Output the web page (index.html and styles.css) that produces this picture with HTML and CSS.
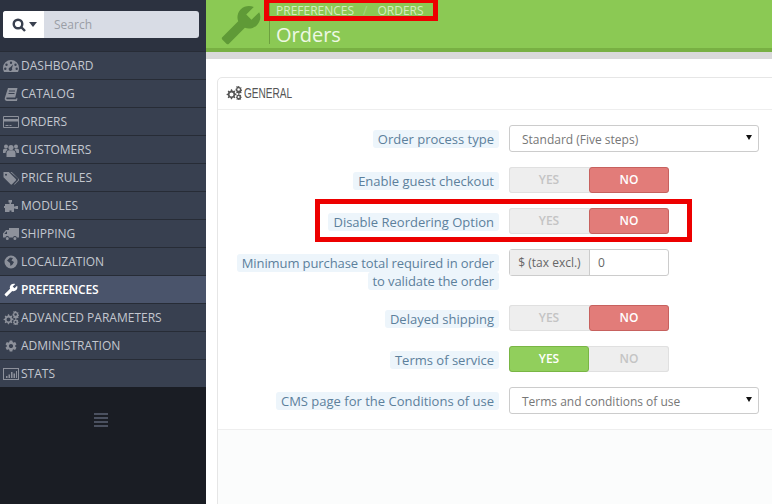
FILE: index.html
```html
<!DOCTYPE html>
<html lang="en">
<head>
    <meta charset="UTF-8">
    <title>Orders</title>
    <link rel="stylesheet" href="styles.css">
</head>
<body>
<svg class="sprite" xmlns="http://www.w3.org/2000/svg">
    <symbol id="i-wrench" viewBox="0 0 24 24"><path transform="translate(24 0) scale(-1 1)" d="M22.7 19l-9.1-9.1c.9-2.3.4-5-1.5-6.9-2-2-5-2.4-7.4-1.3L9 6 6 9 1.6 4.7C.4 7.1.9 10.1 2.9 12.1c1.9 1.9 4.6 2.4 6.9 1.5l9.1 9.1c.4.4 1 .4 1.4 0l2.3-2.3c.5-.4.5-1.1.1-1.4z"/></symbol>
    <symbol id="i-gear" viewBox="0 0 24 24"><path d="M19.14 12.94c.04-.3.06-.61.06-.94 0-.32-.02-.64-.07-.94l2.03-1.58c.18-.14.23-.41.12-.61l-1.92-3.32c-.12-.22-.37-.29-.59-.22l-2.39.96c-.5-.38-1.03-.7-1.62-.94l-.36-2.54c-.04-.24-.24-.41-.48-.41h-3.84c-.24 0-.43.17-.47.41l-.36 2.54c-.59.24-1.13.57-1.62.94l-2.39-.96c-.22-.08-.47 0-.59.22L2.74 8.87c-.12.21-.08.47.12.61l2.03 1.58c-.05.3-.09.63-.09.94s.02.64.07.94l-2.03 1.58c-.18.14-.23.41-.12.61l1.92 3.32c.12.22.37.29.59.22l2.39-.96c.5.38 1.03.7 1.62.94l.36 2.54c.05.24.24.41.48.41h3.84c.24 0 .44-.17.47-.41l.36-2.54c.59-.24 1.13-.56 1.62-.94l2.39.96c.22.08.47 0 .59-.22l1.92-3.32c.12-.22.07-.47-.12-.61l-2.01-1.58zM12 15.6c-1.98 0-3.6-1.62-3.6-3.6s1.62-3.6 3.6-3.6 3.6 1.62 3.6 3.6-1.62 3.6-3.6 3.6z"/></symbol>
    <symbol id="i-gears" viewBox="0 0 16 14"><g fill-rule="evenodd"><path d="M5 3.2l1 .1.4 1.3.9.4 1.2-.6.8.8-.6 1.2.4.9 1.3.4v1.2l-1.3.4-.4.9.6 1.2-.8.8-1.2-.6-.9.4-.4 1.3H5l-.4-1.3-.9-.4-1.2.6-.8-.8.6-1.2-.4-.9L.6 9.1V7.900l1.300-.4.4-.9-.6-1.200.8-.8 1.200.6.9-.4zM5.500 6.500a2 2 0 1 0 0 4 2 2 0 0 0 0-4z"/><path d="M12.500 0l.8.2.2.9.7.4.9-.3.5.6-.5.8.2.8.8.4v.8l-.8.4-.2.8.5.8-.5.6-.9-.3-.7.4-.2.9h-.8l-.3-.9-.7-.3-.9.3-.5-.6.5-.8-.2-.8-.8-.4V2.800l.8-.4.2-.8-.5-.8.5-.6.9.3.7-.3zM12.600 2.200a1.300 1.300 0 1 0 0 2.600 1.300 1.300 0 0 0 0-2.600z"/><path d="M12.500 8l.7.1.2.7.6.3.7-.3.5.5-.4.7.2.6.7.3v.7l-.7.3-.2.6.4.7-.5.5-.7-.3-.6.3-.2.7h-.7l-.3-.7-.6-.3-.7.3-.5-.5.4-.7-.2-.6-.7-.3v-.7l.7-.3.2-.6-.4-.7.5-.5.7.3.6-.3zM12.600 10a1 1 0 1 0 0 2 1 1 0 0 0 0-2z"/></g></symbol>
    <symbol id="i-dashboard" viewBox="0 0 16 14"><path fill-rule="evenodd" d="M8 1a8 8 0 0 1 8 8c0 1.500-.4 2.800-1 4H1C.4 11.800 0 10.500 0 9a8 8 0 0 1 8-8zM8 2.500a1.200 1.200 0 1 0 0 2.400 1.200 1.200 0 0 0 0-2.400zM3.500 4.500a1.200 1.200 0 1 0 0 2.400 1.200 1.200 0 0 0 0-2.400zM12.500 4.500a1.200 1.200 0 1 0 0 2.400 1.200 1.200 0 0 0 0-2.400zM2.300 8.500a1.200 1.200 0 1 0 0 2.400 1.200 1.200 0 0 0 0-2.400zM13.700 8.500a1.200 1.200 0 1 0 0 2.400 1.200 1.200 0 0 0 0-2.400zM10 5.500L7.300 8.300a1.800 1.800 0 1 0 1.700.9z"/></symbol>
    <symbol id="i-book" viewBox="0 0 14 14"><path fill-rule="evenodd" d="M4 1h9.500l-2.300 9.500H3.200c-.8 0-1 .5-.9 1 .1.400.4.700 1 .7h8.900l.3-1.200 1 .4-.6 2.600H3c-1.700 0-2.600-1.400-2.200-3zM5 3.500v1h6v-1zM4.500 6v1h6V6z"/></symbol>
    <symbol id="i-card" viewBox="0 0 16 14"><path fill-rule="evenodd" d="M1 1h14a1 1 0 0 1 1 1v10a1 1 0 0 1-1 1H1a1 1 0 0 1-1-1V2a1 1 0 0 1 1-1zM1 2v2h14V2zM1 6.500V12h14V6.500zM2.500 10h3v1h-3zM6.500 10h2v1h-2z"/></symbol>
    <symbol id="i-users" viewBox="0 0 16 14"><circle cx="8" cy="4.500" r="2.600"/><circle cx="3" cy="3.500" r="2"/><circle cx="13" cy="3.500" r="2"/><path d="M3.500 14V10c0-2 1.200-2.800 2.500-2.800h4c1.300 0 2.500.8 2.500 2.800v4z"/><path d="M0 10V7.500C0 6.300.8 5.800 1.700 5.800h2.100c.2.600.5 1 1 1.300-1.500.4-2.200 1.500-2.300 2.900zM16 10V7.500c0-1.200-.8-1.700-1.700-1.700h-2.100c-.2.600-.5 1-1 1.300 1.500.4 2.200 1.500 2.300 2.900z"/></symbol>
    <symbol id="i-tags" viewBox="0 0 16 14"><path fill-rule="evenodd" d="M.5 1h5.300l7 7c.5.500.5 1 0 1.500l-3.800 3.800c-.5.500-1 .5-1.500 0l-7-7zM3 2.800a1 1 0 1 0 0 2 1 1 0 0 0 0-2z"/><path d="M7.500 1h1.300l7 7c.5.500.5 1 0 1.500l-3.800 3.800c-.4.400-.8.400-1.200.1l3.900-3.900c.7-.7.7-1.500 0-2.200z"/></symbol>
    <symbol id="i-puzzle" viewBox="0 0 16 14"><path d="M6.500 1h2.500v2.500H8v1.500h3v2.500h1.500V7H15v3h-2.500v-.5H11V13H8.500v-1.500h-2V13H2V9H1V7h1V5h4.500V3.500h-1V1z"/></symbol>
    <symbol id="i-truck" viewBox="0 0 16 14"><path fill-rule="evenodd" d="M6 1h10v9.500h-2.200a2 2 0 0 0-3.800 0H6.200a2 2 0 0 0-3.800 0H0V6.500L3 3h3zM4 4.500h-.5L1.500 6.700V7H4zM4.300 10a1.500 1.500 0 1 0 0 3 1.500 1.500 0 0 0 0-3zM11.900 10a1.500 1.500 0 1 0 0 3 1.500 1.500 0 0 0 0-3z"/></symbol>
    <symbol id="i-globe" viewBox="0 0 14 14"><path fill-rule="evenodd" d="M7 .5a6.500 6.500 0 1 1 0 13 6.500 6.500 0 0 1 0-13zM3 5.500l3 2.500 .5 3 2-1.500L10 7 7.500 5.500 9 3 6 2.500z"/></symbol>
    <symbol id="i-chart" viewBox="0 0 16 14"><path fill-rule="evenodd" d="M0 1h16v12H0zM1 2v10h14V2zM3 9h1.500v2H3zM5.500 7.500H7V11H5.500zM8 5h1.500v6H8zM10.500 6.500H12V11h-1.500zM13 4h1v7h-1z"/></symbol>
</svg>

<div class="page">
    <aside class="sidebar">
        <div class="search-wrap">
            <div class="search">
                <div class="search-btn">
                    <svg class="search-ico" viewBox="0 0 14 14"><circle cx="6" cy="6" r="4.300"/><path d="M9.200 9.200L13 13"/></svg>
                    <span class="caret"></span>
                </div>
                <div class="search-input">Search</div>
            </div>
        </div>
        <ul class="menu">
            <li><svg class="mi"><use href="#i-dashboard"/></svg>Dashboard</li>
            <li><svg class="mi"><use href="#i-book"/></svg>Catalog</li>
            <li><svg class="mi"><use href="#i-card"/></svg>Orders</li>
            <li><svg class="mi"><use href="#i-users"/></svg>Customers</li>
            <li><svg class="mi"><use href="#i-tags"/></svg>Price Rules</li>
            <li><svg class="mi"><use href="#i-puzzle"/></svg>Modules</li>
            <li><svg class="mi"><use href="#i-truck"/></svg>Shipping</li>
            <li><svg class="mi"><use href="#i-globe"/></svg>Localization</li>
            <li class="active"><svg class="mi"><use href="#i-wrench"/></svg>Preferences</li>
            <li><svg class="mi"><use href="#i-gears"/></svg>Advanced Parameters</li>
            <li><svg class="mi"><use href="#i-gear"/></svg>Administration</li>
            <li><svg class="mi"><use href="#i-chart"/></svg>Stats</li>
        </ul>
        <div class="collapse"><span></span><span></span><span></span><span></span></div>
    </aside>

    <main class="main">
        <header class="head">
            <svg class="head-ico"><use href="#i-wrench"/></svg>
            <div class="head-text">
                <div class="crumbs"><span>Preferences</span><i>/</i><span>Orders</span></div>
                <h1>Orders</h1>
            </div>
        </header>

        <section class="panel">
            <div class="panel-title"><svg class="pi"><use href="#i-gears"/></svg><span>GENERAL</span></div>
            <div class="form">
                <div class="row">
                    <div class="lbl"><span>Order process type</span></div>
                    <div class="select">Standard (Five steps)<b></b></div>
                </div>
                <div class="row">
                    <div class="lbl"><span>Enable guest checkout</span></div>
                    <div class="switch"><div>YES</div><div class="no">NO</div></div>
                </div>
                <div class="row">
                    <div class="lbl"><span>Disable Reordering Option</span></div>
                    <div class="switch"><div>YES</div><div class="no">NO</div></div>
                </div>
                <div class="row row-tall">
                    <div class="lbl"><span>Minimum purchase total required in order to validate the order</span></div>
                    <div class="money"><div class="addon">$ (tax excl.)</div><div class="val">0</div></div>
                </div>
                <div class="row">
                    <div class="lbl"><span>Delayed shipping</span></div>
                    <div class="switch"><div>YES</div><div class="no">NO</div></div>
                </div>
                <div class="row">
                    <div class="lbl"><span>Terms of service</span></div>
                    <div class="switch"><div class="yes">YES</div><div>NO</div></div>
                </div>
                <div class="row">
                    <div class="lbl"><span>CMS page for the Conditions of use</span></div>
                    <div class="select">Terms and conditions of use<b></b></div>
                </div>
            </div>
            <div class="panel-foot"></div>
        </section>
    </main>

    <!-- red marks drawn over the screenshot -->
    <div class="mark mark-crumbs"></div>
    <div class="mark mark-row"></div>
</div>
</body>
</html>
```

FILE: styles.css
```css
* { box-sizing: border-box; }
html, body { margin: 0; padding: 0; }
body { font-family: "Open Sans", Arial, sans-serif; background: #fff; color: #666; overflow: hidden; }
.sprite { display: none; }
.page { position: relative; display: flex; width: 772px; height: 504px; overflow: hidden; }

/* sidebar */
.sidebar { width: 206px; flex: none; background: #1a1d24; display: flex; flex-direction: column; }
.search-wrap { height: 51px; padding: 11px 7px 0 3px; background: #2c3240; }
.search { display: flex; height: 27px; border-radius: 3px; background: #d8dce5; overflow: hidden; }
.search-btn { width: 41px; background: #fff; display: flex; align-items: center; padding-left: 9px; gap: 3px; }
.search-ico { width: 14px; height: 14px; fill: none; stroke: #39404f; stroke-width: 2.4; }
.caret { width: 0; height: 0; border: 4px solid transparent; border-top: 5px solid #39404f; border-bottom: 0; }
.search-input { padding-left: 10px; font-size: 12px; line-height: 27px; color: #9a9ea6; }
.menu { list-style: none; margin: 0; padding: 0; }
.menu li { display: flex; align-items: center; height: 28px; padding-left: 3px; background: #384050; border-top: 1px solid #272c36; color: #c3c7cf; font-size: 12px; text-transform: uppercase; }
.menu li.active { background: #4a546b; color: #fff; font-weight: 600; letter-spacing: -0.2px; }
.mi { width: 16px; height: 14px; margin-right: 2px; fill: #8d919b; flex: none; }
.active .mi { fill: #fff; }
.collapse { display: flex; flex-direction: column; gap: 2px; width: 14px; margin: 26px 0 0 94px; }
.collapse span { height: 2px; background: #4b5160; }

/* header */
.main { flex: 1; min-width: 0; }
.head { display: flex; height: 52px; padding-left: 14px; background: #8bc954; border-bottom: 4px solid #78b043; box-shadow: 0 7px 0 #d9d9d9; }
.head-ico { width: 42px; height: 42px; margin-top: 4px; fill: #5f9a37; flex: none; }
.head-text { margin: 0 0 4px 7px; padding-left: 6px; border-left: 1px solid #6da03f; }
.crumbs { display: flex; height: 20px; align-items: center; font-size: 12px; color: #d5edc0; text-transform: uppercase; }
.crumbs i { margin: 0 10px 0 9px; font-style: normal; color: #a6d880; }
h1 { margin: 1px 0 0; font-size: 20px; font-weight: 400; line-height: 28px; color: #eef8e4; }

/* panel */
.panel { margin: 25px 0 0 11px; width: 570px; height: 460px; border: 1px solid #e6e6e6; border-radius: 5px; background: #fff; }
.panel-title { display: flex; align-items: center; height: 32px; padding: 0 0 1px 8px; border-bottom: 1px solid #eee; }
.pi { width: 16px; height: 14px; margin-right: 2px; fill: #555; flex: none; }
.panel-title span { display: inline-block; font-family: "Liberation Sans", sans-serif; font-size: 14px; color: #555; transform: scaleX(.72); transform-origin: left center; }
.form { padding-top: 15px; height: 320px; border-bottom: 1px solid #eee; }
.row { display: flex; align-items: flex-start; gap: 10px; margin-bottom: 15px; }
.row-tall { height: 41px; }
.lbl { width: 281px; flex: none; padding: 5px 0 0 8px; text-align: right; font-size: 13px; line-height: 18px; color: #5c809c; }
.row-tall .lbl { padding-left: 18px; letter-spacing: -0.1px; }
.lbl span { background: #edf5fb; padding: 0 5px; border-radius: 3px; -webkit-box-decoration-break: clone; box-decoration-break: clone; }
.select { position: relative; width: 250px; height: 27px; border: 1px solid #ccc; border-radius: 3px; padding-left: 12px; font-size: 12px; line-height: 27px; color: #777; }
.select b { position: absolute; right: 6px; top: 9px; border: 3px solid transparent; border-top: 5px solid #111; border-bottom: 0; }
.switch { display: flex; width: 160px; height: 26px; border-radius: 3px; background: #eee; box-shadow: inset 0 0 0 1px #e0e0e0; font-size: 12px; font-weight: 600; color: #c4c4c4; text-align: center; line-height: 25px; }
.switch div { width: 80px; }
.switch .no { background: #e27c79; border: 1px solid #c7615e; border-radius: 3px; color: #fff; line-height: 23px; }
.switch .yes { background: #91cf5c; border: 1px solid #79b644; border-radius: 3px; color: #fff; line-height: 23px; }
.money { display: flex; width: 160px; height: 27px; border: 1px solid #ccc; border-radius: 3px; font-size: 12px; line-height: 25px; color: #666; }
.addon { width: 80px; background: #eee; border-right: 1px solid #ccc; text-align: center; }
.val { padding-left: 8px; }
.panel-foot { height: 100px; background: #fbfcfc; }

/* red marks */
.mark { position: absolute; border: 5px solid #ed0000; pointer-events: none; }
.mark-crumbs { left: 264px; top: -2px; width: 174px; height: 23px; }
.mark-row { left: 315px; top: 199px; width: 377px; height: 43px; }
```
